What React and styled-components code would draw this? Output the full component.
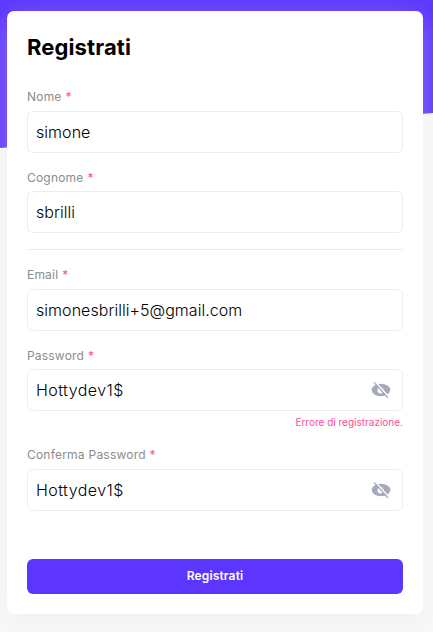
import React from "react";
import styled, { createGlobalStyle } from "styled-components";

const GlobalStyle = createGlobalStyle`
  * { box-sizing: border-box; }
  body { margin: 0; font-family: Inter, "Liberation Sans", sans-serif; }
`;

const Page = styled.div`
  height: 632px;
  padding: 11px 10px 18px 7px;
  overflow: hidden;
  background: #f9f9f9;
  position: relative;
`;

const Banner = styled.div`
  position: absolute;
  inset: 0 0 auto 0;
  height: 148px;
  background: #5c36ff;
  clip-path: polygon(0 0, 100% 0, 100% 113px, 0 148px);
`;

const Card = styled.form`
  position: relative;
  display: flex;
  flex-direction: column;
  height: 603px;
  padding: 20px;
  border-radius: 7px;
  background: #fff;
  box-shadow: 0 8px 30px rgba(225, 225, 225, 0.36);
`;

const Title = styled.h1`
  margin: 0 0 28px;
  font-size: 22px;
  line-height: 32px;
  font-weight: 700;
  letter-spacing: 0.1px;
  color: #000;
`;

const Field = styled.div`
  display: flex;
  flex-direction: column;
  margin-bottom: ${(p) => p.$gap}px;
`;

const Label = styled.label`
  height: ${(p) => p.$height}px;
  font-size: 12px;
  line-height: 12px;
  letter-spacing: 0.2px;
  word-spacing: 0.3px;
  color: #8c8c8c;
`;

const Required = styled.span`
  color: #ff4d94;
`;

const InputBox = styled.div`
  display: flex;
  align-items: center;
  justify-content: space-between;
  height: 42px;
  padding: 0 11px 0 8px;
  border: 1px solid #ededf0;
  border-radius: 6px;
  background: #fff;
`;

const Input = styled.input`
  flex: 1;
  min-width: 0;
  padding: 0;
  border: 0;
  outline: 0;
  background: transparent;
  font: 300 16px/20px Inter, "Liberation Sans", sans-serif;
  letter-spacing: ${(p) => (p.$secret ? 0.45 : 0.05)}px;
  color: #000;
`;

const EyeIcon = styled.svg`
  width: 20px;
  height: 18px;
  flex: none;
`;

const Divider = styled.hr`
  width: 100%;
  height: 1px;
  margin: 0 0 19px;
  border: 0;
  background: #ececee;
`;

const ErrorText = styled.div`
  height: 13px;
  margin-top: 5px;
  font-size: 10px;
  line-height: 12px;
  text-align: right;
  color: #ff4d94;
`;

const Submit = styled.button`
  height: 35px;
  margin-top: auto;
  padding: 0 0 2px;
  border: 0;
  border-radius: 6px;
  background: #5c36ff;
  color: #fff;
  font: 600 12px/15px Inter, "Liberation Sans", sans-serif;
  letter-spacing: 0.15px;
`;

function HiddenEye() {
  return (
    <EyeIcon viewBox="0 0 20 18" aria-hidden="true">
      <ellipse cx="10" cy="9" rx="9.3" ry="6.2" fill="#a5a9bd" />
      <circle cx="9.6" cy="9.3" r="3.1" fill="#fff" />
      <circle cx="10.8" cy="8.4" r="1.6" fill="#a5a9bd" />
      <path d="M4.3 0.9 18.1 16.2" stroke="#fff" strokeWidth="1.5" />
      <path d="M3 1.4 16.8 16.7" stroke="#a5a9bd" strokeWidth="1.3" />
    </EyeIcon>
  );
}

function FormField({ label, value, gap, labelHeight = 20, secret, error }) {
  return (
    <Field $gap={gap}>
      <Label $height={labelHeight}>
        {label} <Required>*</Required>
      </Label>
      <InputBox>
        <Input $secret={secret} aria-label={label} defaultValue={value} spellCheck={false} />
        {secret && <HiddenEye />}
      </InputBox>
      {error && <ErrorText>{error}</ErrorText>}
    </Field>
  );
}

export default function App() {
  return (
    <Page>
      <GlobalStyle />
      <Banner />
      <Card>
        <Title>Registrati</Title>
        <FormField label="Nome" value="simone" gap={19} />
        <FormField label="Cognome" value="sbrilli" gap={16} labelHeight={19} />
        <Divider />
        <FormField label="Email" value="simonesbrilli+5@gmail.com" gap={19} />
        <FormField label="Password" value="Hottydev1$" gap={20} labelHeight={19} secret error="Errore di registrazione." />
        <FormField label="Conferma Password" value="Hottydev1$" gap={0} secret />
        <Submit type="button">Registrati</Submit>
      </Card>
    </Page>
  );
}
